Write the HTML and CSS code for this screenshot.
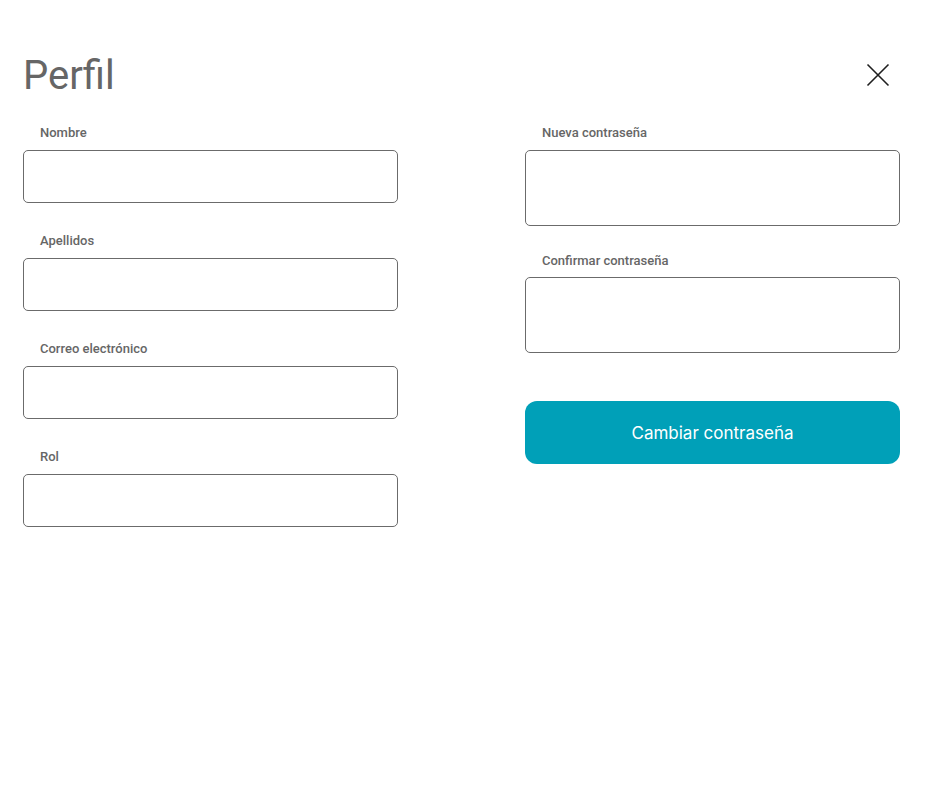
FILE: index.html
```html
<!DOCTYPE html>
<html lang="es">
<head>
<meta charset="utf-8">
<title>Perfil</title>
<link rel="stylesheet" href="styles.css">
</head>
<body>
<div class="page">
  <header class="header">
    <h1 class="title">Perfil</h1>
    <button class="close" aria-label="Cerrar">
      <svg width="24" height="24" viewBox="0 0 24 24"><path d="M1.5 1.5 L22.5 22.5 M22.5 1.5 L1.5 22.5" stroke="#1f1f1f" stroke-width="1.6" fill="none"/></svg>
    </button>
  </header>
  <div class="columns">
    <div class="col">
      <div class="field">
        <label class="label">Nombre</label>
        <input class="input" type="text">
      </div>
      <div class="field">
        <label class="label">Apellidos</label>
        <input class="input" type="text">
      </div>
      <div class="field">
        <label class="label">Correo electrónico</label>
        <input class="input" type="text">
      </div>
      <div class="field">
        <label class="label">Rol</label>
        <input class="input" type="text">
      </div>
    </div>
    <div class="col">
      <div class="field field-r">
        <label class="label">Nueva contraseña</label>
        <input class="input input-tall" type="password">
      </div>
      <div class="field field-r2">
        <label class="label label-r2">Confirmar contraseña</label>
        <input class="input input-tall" type="password">
      </div>
      <button class="primary">Cambiar contraseña</button>
    </div>
  </div>
</div>
</body>
</html>
```
FILE: styles.css
```css
* { box-sizing: border-box; }
html, body { margin: 0; background: #fff; }
body { font-family: Roboto, "Noto Sans", sans-serif; }
.page { padding: 51px 25px 0 23px; }
.header { display: flex; justify-content: space-between; align-items: center; height: 50px; }
.title { margin: 0; font-size: 40px; font-weight: 400; line-height: 50px; color: #666; }
.close { width: 24px; height: 24px; margin: -3px 10px 0 0; padding: 0; border: 0; background: none; display: flex; }
.columns { display: grid; grid-template-columns: 375px 375px; justify-content: space-between; margin-top: 23px; }
.col { display: flex; flex-direction: column; }
.field { display: flex; flex-direction: column; }
.field + .field { margin-top: 29px; }
.label { font-size: 13px; font-weight: 500; line-height: 16px; color: #666; padding: 1px 0 0 17px; margin-bottom: 9px; }
.input { height: 53px; width: 100%; border: 1px solid #6b6b6b; border-radius: 5px; background: #fff; font: inherit; }
.input-tall { height: 76px; }
.field-r2.field-r2 { margin-top: 26px; }
.label-r2 { margin-bottom: 8px; }
.primary { margin-top: 48px; height: 63px; width: 100%; border: 0; border-radius: 12px; background: #00a0b8; color: #fff; font-family: Inter, Roboto, sans-serif; font-size: 17px; font-weight: 400; }
```
